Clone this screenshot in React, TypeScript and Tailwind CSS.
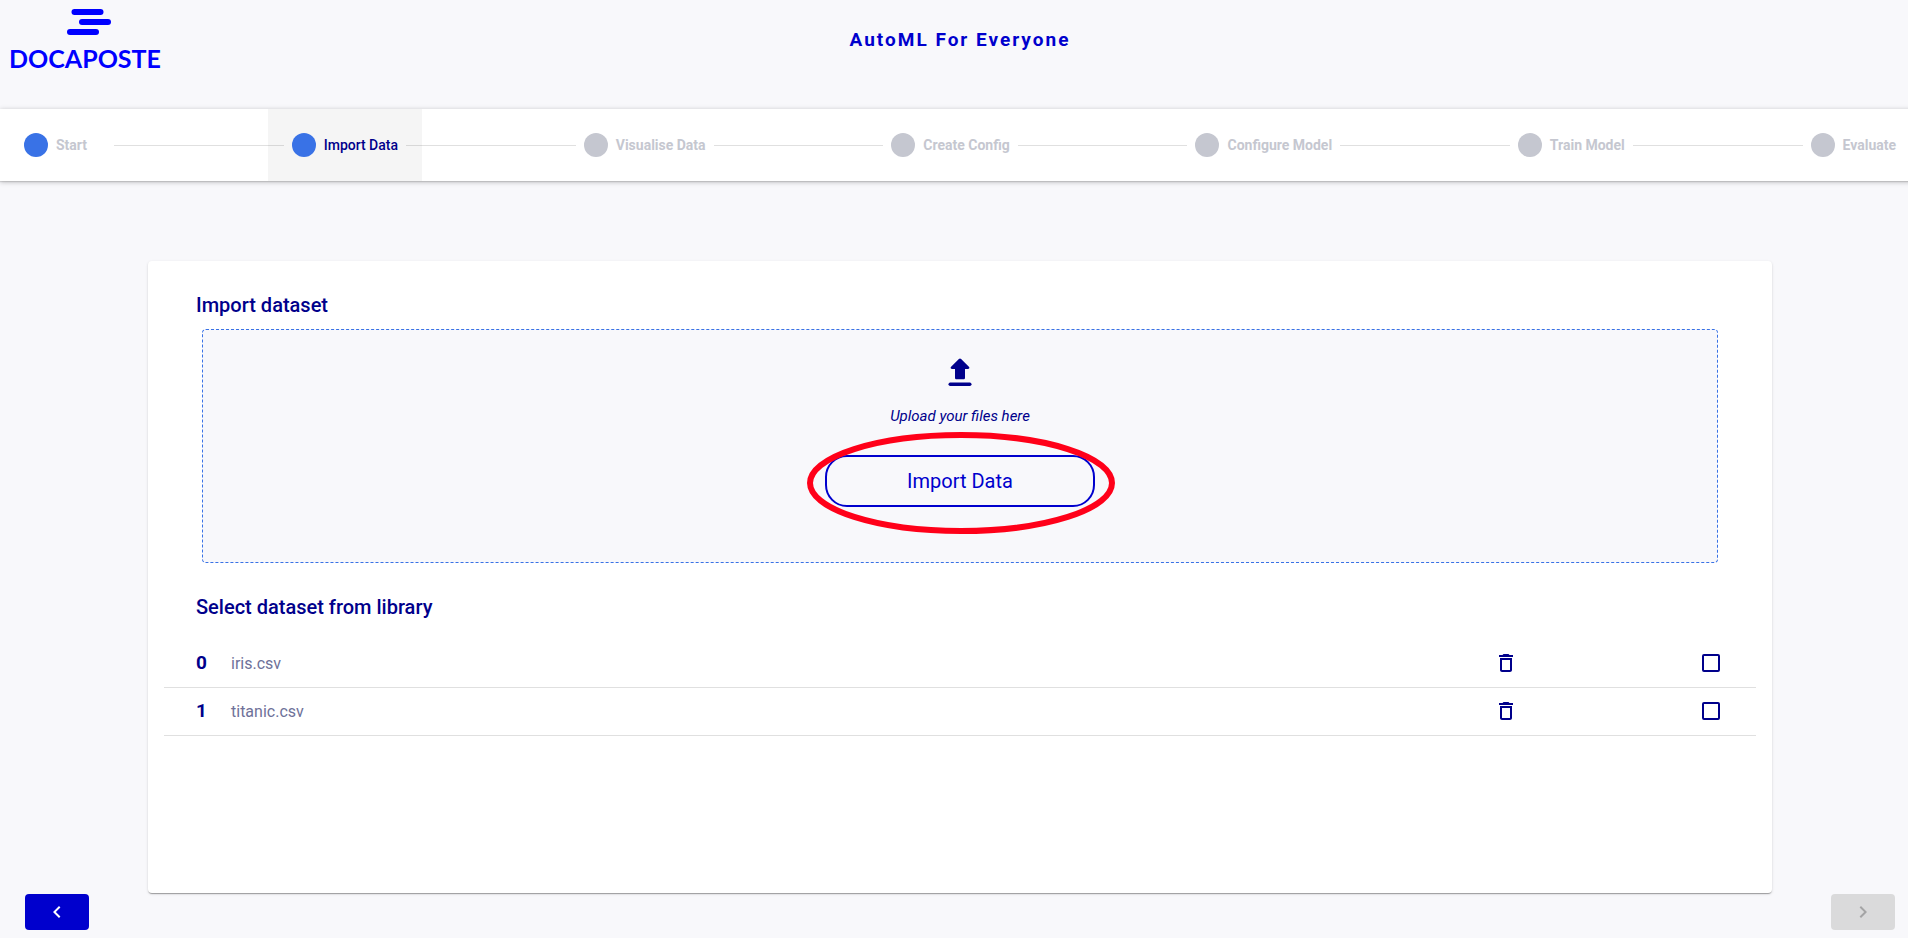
import { MdChevronLeft, MdChevronRight, MdDeleteOutline } from "react-icons/md";

type Step = { label: string; done: boolean; active?: boolean };

const steps: Step[] = [
  { label: "Start", done: true },
  { label: "Import Data", done: true, active: true },
  { label: "Visualise Data", done: false },
  { label: "Create Config", done: false },
  { label: "Configure Model", done: false },
  { label: "Train Model", done: false },
  { label: "Evaluate", done: false },
];

const datasets = ["iris.csv", "titanic.csv"];

function Logo() {
  return (
    <a href="#" className="flex w-[152px] flex-col items-center text-[#0000ff]">
      <svg width="52" height="27" viewBox="-8 0 52 27" fill="currentColor" aria-hidden="true">
        <rect x="4.5" y="0" width="32" height="6" rx="3" />
        <rect x="12" y="10" width="32" height="6" rx="3" />
        <rect x="0" y="20" width="32" height="6" rx="3" />
      </svg>
      <span className="mt-2.5 font-[Lato,sans-serif] text-[25px] leading-6 font-bold">DOCAPOSTE</span>
    </a>
  );
}

function Stepper() {
  return (
    <nav
      aria-label="Progress"
      className="bg-white shadow-[0_1px_1px_0_rgba(0,0,0,0.1),0_1px_5px_0_rgba(0,0,0,0.25)]"
    >
      <ol className="flex items-center">
        {steps.map((step, i) => (
          <li key={step.label} className={i > 0 ? "flex flex-auto items-center" : "flex items-center"}>
            {i > 0 && <span className="z-10 -mx-4 h-px flex-1 bg-black/12" />}
            <button
              type="button"
              aria-current={step.active ? "step" : undefined}
              className={
                step.active
                  ? "flex h-[72px] items-center gap-2 bg-[#f5f5f5] px-6 font-medium text-[#00008b]"
                  : "flex h-[72px] items-center gap-2 px-6 font-bold text-[#c5c7d0]"
              }
            >
              <span className={step.done ? "size-6 rounded-full bg-[#3972e6]" : "size-6 rounded-full bg-[#c5c7d0]"} />
              <span className="min-w-[50px] text-left text-sm whitespace-nowrap">{step.label}</span>
            </button>
          </li>
        ))}
      </ol>
    </nav>
  );
}

function UploadIcon() {
  return (
    <svg width="24" height="28" viewBox="0 0 24 28" fill="currentColor" aria-hidden="true">
      <path d="M10.9 1a1.6 1.6 0 0 1 2.2 0l7.800 7.800c.9 1 .4 2.200-.8 2.200H17v8.700c0 1.100-.6 1.600-1.700 1.600H8.700c-1.100 0-1.700-.5-1.700-1.600V11H3.900c-1.200 0-1.700-1.200-.8-2.200z" />
      <rect x="0.500" y="24.500" width="23" height="3.400" rx="1.700" />
    </svg>
  );
}

function DropZone() {
  return (
    <div className="mx-[38px] mt-2.5 flex h-[234px] flex-col items-center rounded border border-dashed border-[#3972e6] bg-[#f8f8fb] pt-7 text-[#00008b]">
      <UploadIcon />
      <p className="mt-[18px] text-[15px] leading-6 italic">Upload your files here</p>
      <div className="relative mt-[27px]">
        <button
          type="button"
          className="h-[52px] w-[270px] rounded-[22px] border-2 border-[#0000cd] text-xl text-[#0000cd]"
        >
          Import Data
        </button>
        <svg
          className="pointer-events-none absolute -top-[23px] -left-[18px]"
          width="308"
          height="102"
          viewBox="0 0 308 102"
          fill="none"
          aria-hidden="true"
        >
          <ellipse cx="154" cy="51" rx="151" ry="48" stroke="#ff0019" strokeWidth="6" />
        </svg>
      </div>
    </div>
  );
}

function Library() {
  return (
    <table className="mt-[18px] w-full table-fixed">
      <tbody>
        {datasets.map((name, i) => (
          <tr key={name} className="h-12 border-b border-[#e0e0e0]">
            <td className="w-[67px] pl-8 text-[19px] font-bold text-[#00008b]">{i}</td>
            <td className="pt-0.5 text-base text-[#6e7199]">{name}</td>
            <td className="w-[208px]">
              <button type="button" aria-label={`Delete ${name}`} className="block text-[#00008b]">
                <MdDeleteOutline size={24} />
              </button>
            </td>
            <td className="w-[54px]">
              <input
                type="checkbox"
                aria-label={`Select ${name}`}
                className="block size-[18px] appearance-none rounded-xs border-2 border-[#00008b] checked:bg-[#00008b]"
              />
            </td>
          </tr>
        ))}
      </tbody>
    </table>
  );
}

export default function App() {
  return (
    <div className="overflow-x-hidden bg-[#f8f8fb] font-[Roboto,sans-serif]">
      <div className="-mr-3 flex min-h-screen flex-col">
        <header className="grid h-[109px] grid-cols-[1fr_auto_1fr] items-start px-[9px] pt-[9px]">
          <Logo />
          <h1 className="pt-[17px] text-[19px] leading-7 font-bold tracking-[2px] text-[#0000cd]">AutoML For Everyone</h1>
        </header>
        <Stepper />
        <main className="mx-[148px] mt-20 flex-1 rounded bg-white px-4 pt-[30px] shadow-[0_2px_1px_-1px_rgba(0,0,0,0.2),0_1px_1px_0_rgba(0,0,0,0.14),0_1px_3px_0_rgba(0,0,0,0.12)]">
          <h2 className="pl-8 text-xl leading-7 font-medium text-[#00008b]">Import dataset</h2>
          <DropZone />
          <h2 className="mt-[30px] pl-8 text-xl leading-7 font-medium text-[#00008b]">
            Select dataset from library
          </h2>
          <Library />
        </main>
        <footer className="flex justify-between px-[25px] pt-px pb-2">
          <button
            type="button"
            aria-label="Previous step"
            className="flex h-9 w-16 items-center justify-center rounded bg-[#0000cd] text-white"
          >
            <MdChevronLeft size={24} />
          </button>
          <button
            type="button"
            aria-label="Next step"
            disabled
            className="flex h-9 w-16 items-center justify-center rounded bg-[#dadadb] text-[#a4a4a5]"
          >
            <MdChevronRight size={24} />
          </button>
        </footer>
      </div>
    </div>
  );
}
